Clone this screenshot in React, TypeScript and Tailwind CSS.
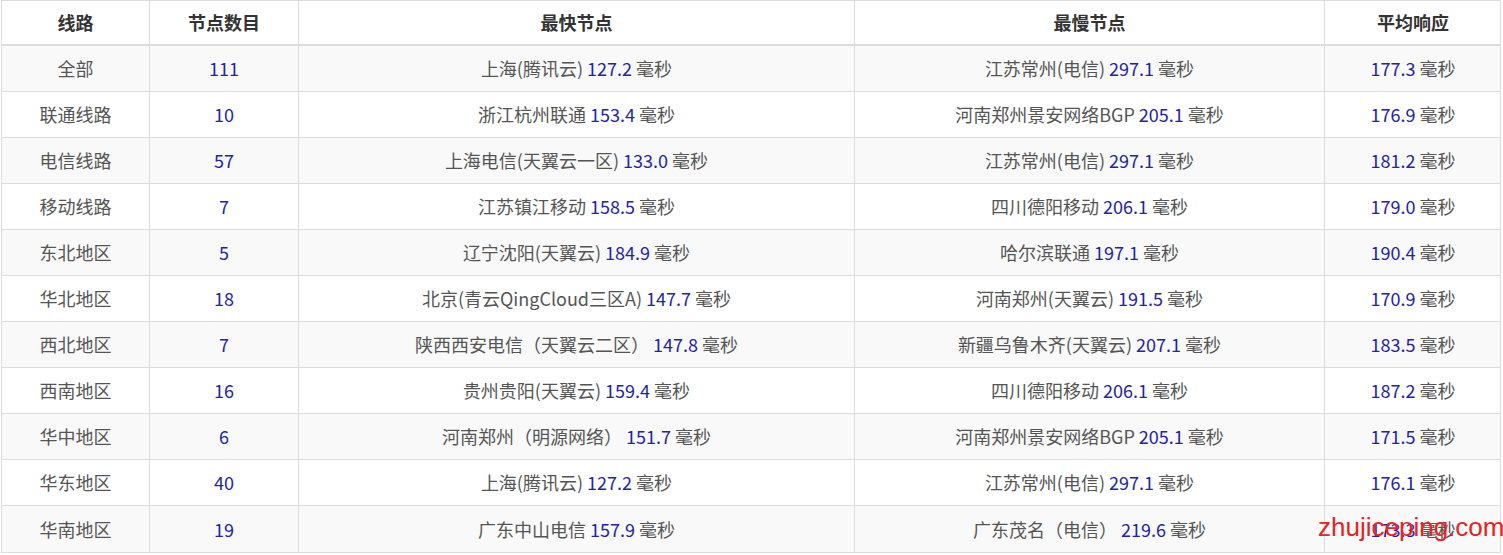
const rows: [string, string, string, string, string, string, string][] = [
  ['全部', '111', '上海(腾讯云)', '127.2', '江苏常州(电信)', '297.1', '177.3'],
  ['联通线路', '10', '浙江杭州联通', '153.4', '河南郑州景安网络BGP', '205.1', '176.9'],
  ['电信线路', '57', '上海电信(天翼云一区)', '133.0', '江苏常州(电信)', '297.1', '181.2'],
  ['移动线路', '7', '江苏镇江移动', '158.5', '四川德阳移动', '206.1', '179.0'],
  ['东北地区', '5', '辽宁沈阳(天翼云)', '184.9', '哈尔滨联通', '197.1', '190.4'],
  ['华北地区', '18', '北京(青云QingCloud三区A)', '147.7', '河南郑州(天翼云)', '191.5', '170.9'],
  ['西北地区', '7', '陕西西安电信（天翼云二区）', '147.8', '新疆乌鲁木齐(天翼云)', '207.1', '183.5'],
  ['西南地区', '16', '贵州贵阳(天翼云)', '159.4', '四川德阳移动', '206.1', '187.2'],
  ['华中地区', '6', '河南郑州（明源网络）', '151.7', '河南郑州景安网络BGP', '205.1', '171.5'],
  ['华东地区', '40', '上海(腾讯云)', '127.2', '江苏常州(电信)', '297.1', '176.1'],
  ['华南地区', '19', '广东中山电信', '157.9', '广东茂名（电信）', '219.6', '173.3'],
]

const cols = 'grid grid-cols-[148px_149px_556px_470px_176px]'
const cell = 'flex items-center justify-center border-r border-[#dcdcdc] last:border-r-0 whitespace-pre'
const blue = 'text-[#2323a8]'

function Ms({ v }: { v: string }) {
  return (
    <>
      <span className={blue}>{v}</span>
      <span> 毫秒</span>
    </>
  )
}

export default function App() {
  return (
    <div
      className="relative w-[1503px] h-[555px] bg-white text-[18px] text-[#555]"
      style={{ fontFamily: '"Noto Sans CJK SC", "Noto Sans", sans-serif' }}
    >
      <div className="ml-[1px] w-[1500px] border border-[#dcdcdc]">
        <div className={`${cols} h-[45px] border-b-2 border-[#dcdcdc] font-bold text-[#333]`}>
          {['线路', '节点数目', '最快节点', '最慢节点', '平均响应'].map((h) => (
            <div key={h} className={cell}>{h}</div>
          ))}
        </div>
        {rows.map((r, i) => (
          <div
            key={i}
            className={`${cols} h-[46px] border-b border-[#dcdcdc] last:border-b-0 ${i % 2 === 0 ? 'bg-[#f9f9f9]' : 'bg-white'}`}
          >
            <div className={cell}>{r[0]}</div>
            <div className={`${cell} ${blue}`}>{r[1]}</div>
            <div className={cell}>{r[2]} <Ms v={r[3]} /></div>
            <div className={cell}>{r[4]} <Ms v={r[5]} /></div>
            <div className={cell}><Ms v={r[6]} /></div>
          </div>
        ))}
      </div>
      <div
        className="absolute left-[1318px] top-[514px] text-[26px] leading-none text-[#e8231f]"
        style={{ fontFamily: '"Liberation Sans", sans-serif' }}
      >
        zhujiceping.com
      </div>
    </div>
  )
}
